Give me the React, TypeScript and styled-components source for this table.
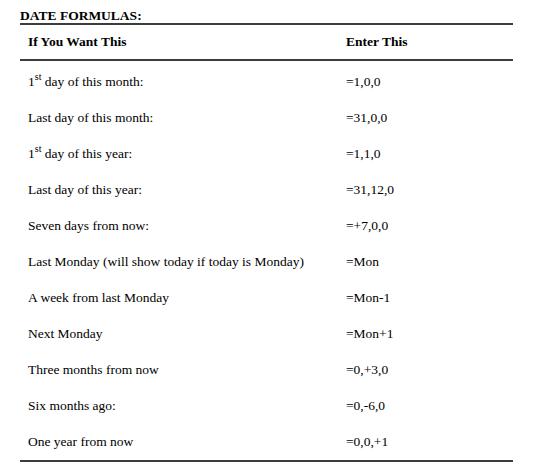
import styled, { createGlobalStyle } from "styled-components"

const GlobalStyle = createGlobalStyle`
  html, body {
    margin: 0;
    padding: 0;
    background: #ffffff;
  }
`

type Formula = {
  label: string
  sup?: string
  rest?: string
  value: string
}

const formulas: Formula[] = [
  { label: "1", sup: "st", rest: " day of this month:", value: "=1,0,0" },
  { label: "Last day of this month:", value: "=31,0,0" },
  { label: "1", sup: "st", rest: " day of this year:", value: "=1,1,0" },
  { label: "Last day of this year:", value: "=31,12,0" },
  { label: "Seven days from now:", value: "=+7,0,0" },
  { label: "Last Monday (will show today if today is Monday)", value: "=Mon" },
  { label: "A week from last Monday", value: "=Mon-1" },
  { label: "Next Monday", value: "=Mon+1" },
  { label: "Three months from now", value: "=0,+3,0" },
  { label: "Six months ago:", value: "=0,-6,0" },
  { label: "One year from now", value: "=0,0,+1" },
]

function App() {
  return (
    <Page>
      <GlobalStyle />
      <Title>DATE FORMULAS:</Title>
      <Table>
        <HeadRow>
          <Cell>If You Want This</Cell>
          <Cell>Enter This</Cell>
        </HeadRow>
        <Body>
          {formulas.map((f, i) => (
            <Row key={i}>
              <Cell>
                {f.label}
                {f.sup && <Sup>{f.sup}</Sup>}
                {f.rest}
              </Cell>
              <Cell>{f.value}</Cell>
            </Row>
          ))}
        </Body>
      </Table>
    </Page>
  )
}

const Page = styled.div`
  width: 544px;
  height: 467px;
  padding: 9px 0 0 20px;
  box-sizing: border-box;
  font-family: "Liberation Serif", "DejaVu Serif", serif;
  font-size: 13.5px;
  color: #000000;
`

const Title = styled.div`
  font-weight: bold;
  line-height: 14px;
`

const Table = styled.div`
  width: 493px;
  border-top: 2px solid #3c3c3c;
  border-bottom: 2px solid #3c3c3c;
`

const HeadRow = styled.div`
  display: grid;
  grid-template-columns: 318px 1fr;
  height: 34px;
  align-items: center;
  padding-left: 8px;
  font-weight: bold;
  border-bottom: 2px solid #3c3c3c;
`

const Body = styled.div`
  padding: 3px 0 0;
`

const Row = styled.div`
  display: grid;
  grid-template-columns: 318px 1fr;
  height: 36px;
  align-items: center;
  padding-left: 8px;
`

const Cell = styled.div`
  white-space: nowrap;
`

const Sup = styled.sup`
  font-size: 10px;
  line-height: 0;
  vertical-align: 6px;
`

export default App
